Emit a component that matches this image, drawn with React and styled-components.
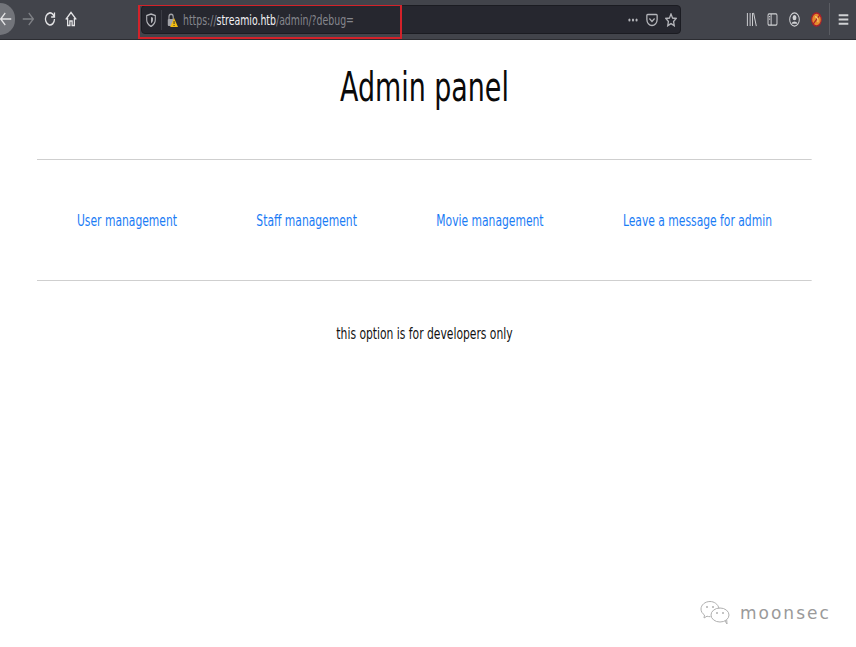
import React from 'react';
import styled, { createGlobalStyle } from 'styled-components';

// the whole shot is squeezed horizontally, so text blocks get the same factor
const SQUEEZE = 0.747;

const GlobalStyle = createGlobalStyle`
  html, body {
    margin: 0;
    padding: 0;
    background: #fff;
    font-family: "DejaVu Sans", "Liberation Sans", sans-serif;
  }
`;

const Page = styled.div`
  width: 856px;
  height: 647px;
  position: relative;
  overflow: hidden;
  display: flex;
  flex-direction: column;
`;

const Toolbar = styled.div`
  height: 39px;
  background: #42444b;
  border-bottom: 1px solid #2c2d32;
  display: flex;
  align-items: flex-start;
  flex-shrink: 0;
  position: relative;
`;

const NavGroup = styled.div`
  width: 141px;
  height: 38px;
  flex-shrink: 0;
  display: flex;
  align-items: center;
`;

const BackButton = styled.div`
  width: 15px;
  height: 32px;
  margin-right: 7px;
  border-radius: 0 16px 16px 0 / 0 16px 16px 0;
  background: #72747a;
  display: flex;
  align-items: center;
  justify-content: flex-start;
`;

const NavIcon = styled.svg`
  width: 12px;
  height: 16px;
  margin-right: ${p => p.$gap || 0}px;
  flex-shrink: 0;
  fill: none;
  stroke: ${p => p.$color || '#e4e4e6'};
  stroke-width: 1.7;
`;

const UrlBar = styled.div`
  width: 540px;
  height: 29px;
  margin-top: 5px;
  background: #26272f;
  border: 1px solid #1b1c22;
  border-radius: 4px;
  box-sizing: border-box;
  display: flex;
  align-items: center;
  padding: 0 3px 0 4px;
`;

const UrlIcon = styled.svg`
  width: ${p => p.$w || 10}px;
  height: 14px;
  flex-shrink: 0;
  fill: none;
  stroke: ${p => p.$color || '#b4b5ba'};
  stroke-width: 1.5;
  margin-left: ${p => p.$left || 0}px;
`;

const Divider = styled.div`
  width: 1px;
  height: 20px;
  background: #3b3c44;
  margin: 0 5px;
`;

const UrlText = styled.div`
  font-size: 14px;
  font-stretch: condensed;
  color: #85868d;
  margin-left: 5px;
  white-space: nowrap;
  flex: 1;
  transform: scaleX(0.743);
  transform-origin: left center;
  b {
    font-weight: 400;
    color: #f2f2f4;
  }
`;

const RightGroup = styled.div`
  flex: 1;
  height: 38px;
  display: flex;
  align-items: center;
  padding-left: 65px;
`;

const ToolIcon = styled.svg`
  width: 11px;
  height: 15px;
  flex-shrink: 0;
  fill: none;
  stroke: #d0d1d4;
  stroke-width: 1.4;
  margin-right: ${p => p.$gap || 0}px;
`;

const ToolDivider = styled.div`
  width: 1px;
  height: 32px;
  background: #5a5c62;
  margin: 0 8px 0 7px;
`;

const Highlight = styled.div`
  position: absolute;
  left: 138px;
  top: 5px;
  width: 264px;
  height: 34px;
  box-sizing: border-box;
  border: 2px solid #d3222a;
  border-top-width: 1px;
`;

const Content = styled.main`
  width: ${775 / SQUEEZE}px;
  margin-left: 37px;
  flex: 1;
  font-stretch: condensed;
  transform: scaleX(${SQUEEZE});
  transform-origin: left top;
`;

const Title = styled.h1`
  margin: 22px 0 0;
  height: 97px;
  font-size: 40px;
  line-height: 50px;
  font-weight: 400;
  text-align: center;
  color: #0a0a0a;
`;

const Rule = styled.hr`
  margin: 0;
  border: 0;
  border-top: 1px solid #cfcfcf;
`;

const Menu = styled.nav`
  height: 120px;
  display: flex;
  align-items: center;
  padding: 0 ${40 / SQUEEZE}px;
  justify-content: space-between;
`;

const MenuLink = styled.a`
  color: #1a7cf5;
  font-size: 16px;
  text-decoration: none;
`;

const Note = styled.p`
  margin: 42px 0 0;
  text-align: center;
  font-size: 16px;
  line-height: 21px;
  color: #111;
`;

const Watermark = styled.div`
  position: absolute;
  left: 700px;
  top: 600px;
  display: flex;
  align-items: center;
  gap: 8px;
`;

const WatermarkText = styled.span`
  font-size: 17px;
  letter-spacing: 2px;
  color: #9a9a9a;
`;

const LINKS = ['User management', 'Staff management', 'Movie management', 'Leave a message for admin'];

const App = () => (
  <>
    <GlobalStyle />
    <Page>
      <Toolbar>
        <NavGroup>
          <BackButton>
            <NavIcon viewBox="0 0 16 16" preserveAspectRatio="none">
              <path d="M15 8H1M7 2L1 8l6 6" />
            </NavIcon>
          </BackButton>
          <NavIcon viewBox="0 0 16 16" preserveAspectRatio="none" $gap={10} $color="#7f8186">
            <path d="M1 8h14M9 2l6 6-6 6" />
          </NavIcon>
          <NavIcon viewBox="0 0 16 16" preserveAspectRatio="none" $gap={9}>
            <path d="M14 8a6 6 0 1 1-2-4.500L14 6M14 1.500V6H9.500" />
          </NavIcon>
          <NavIcon viewBox="0 0 16 16" preserveAspectRatio="none">
            <path d="M1 8.500l7-7 7 7M3.500 7v7.500h3V10h3v4.500h3V7" />
          </NavIcon>
        </NavGroup>
        <UrlBar>
          <UrlIcon viewBox="0 0 14 14" preserveAspectRatio="none">
            <path d="M7 1l6 1.500V7c0 3-3 5-6 6.500C4 12 1 10 1 7V2.500z" />
            <path d="M7 4l2.800.8V7c0 1.500-1.300 2.500-2.800 3.300z" fill="#b4b5ba" stroke="none" />
          </UrlIcon>
          <Divider />
          <UrlIcon viewBox="0 0 14 14" preserveAspectRatio="none" $w={11} $color="#a2a3a8">
            <path d="M2.500 6V4a2.700 2.700 0 0 1 5.400 0v2" />
            <rect x="1" y="6" width="8" height="7" rx="1" fill="#a2a3a8" stroke="none" />
            <path d="M9 5l5 9H4z" fill="#f2bd12" stroke="none" />
            <path d="M9 8v3M9 12v1" stroke="#26272f" strokeWidth="1" />
          </UrlIcon>
          <UrlText>https://<b>streamio.htb</b>/admin/?debug=</UrlText>
          <UrlIcon viewBox="0 0 14 14" preserveAspectRatio="none">
            <circle cx="2" cy="7" r="1.500" fill="#b4b5ba" stroke="none" />
            <circle cx="7" cy="7" r="1.500" fill="#b4b5ba" stroke="none" />
            <circle cx="12" cy="7" r="1.500" fill="#b4b5ba" stroke="none" />
          </UrlIcon>
          <UrlIcon viewBox="0 0 14 14" preserveAspectRatio="none" $w={12} $left={8}>
            <path d="M2 1.500h10a1 1 0 0 1 1 1v4a6 6 0 0 1-12 0v-4a1 1 0 0 1 1-1z" />
            <path d="M4 5.500L7 8.500l3-3" />
          </UrlIcon>
          <UrlIcon viewBox="0 0 14 14" preserveAspectRatio="none" $w={12} $left={7}>
            <path d="M7 1l1.800 4 4.200.5-3 2.900.8 4.300L7 10.600l-3.800 2.100.8-4.300-3-2.900L5.200 5z" />
          </UrlIcon>
        </UrlBar>
        <RightGroup>
          <ToolIcon viewBox="0 0 16 16" preserveAspectRatio="none" $gap={10}>
            <path d="M2 1v14M6 1v14M9.500 1v14M11 1l4 14" />
          </ToolIcon>
          <ToolIcon viewBox="0 0 16 16" preserveAspectRatio="none" $gap={11}>
            <rect x="1.500" y="2" width="13" height="12" rx="1.500" />
            <path d="M6 2v12M3 5h1.500M3 7.500h1.500" />
          </ToolIcon>
          <ToolIcon viewBox="0 0 16 16" preserveAspectRatio="none" $gap={11}>
            <circle cx="8" cy="8" r="7" />
            <circle cx="8" cy="6" r="2.800" fill="#d0d1d4" stroke="none" />
            <path d="M3.500 12.500c1.500-3 7.500-3 9 0z" fill="#d0d1d4" stroke="none" />
          </ToolIcon>
          <ToolIcon viewBox="0 0 16 16" preserveAspectRatio="none">
            <circle cx="8" cy="8" r="7" fill="#e58a2b" stroke="#a8202c" strokeWidth="1.600" />
            <path d="M3 13L13 3" stroke="#a8202c" strokeWidth="1.500" />
            <path d="M6 5c3 0 5 3 4 6" stroke="#f7cf78" strokeWidth="1.600" />
          </ToolIcon>
          <ToolDivider />
          <ToolIcon viewBox="0 0 16 16" preserveAspectRatio="none" style={{ strokeWidth: 2 }}>
            <path d="M1 3.500h14M1 8h14M1 12.500h14" />
          </ToolIcon>
        </RightGroup>
        <Highlight />
      </Toolbar>
      <Content>
        <Title>Admin panel</Title>
        <Rule />
        <Menu>
          {LINKS.map(link => (
            <MenuLink href="#" key={link}>{link}</MenuLink>
          ))}
        </Menu>
        <Rule />
        <Note>this option is for developers only</Note>
      </Content>
      <Watermark>
        <svg width="32" height="26" viewBox="0 0 32 26" fill="none" stroke="#b0b0b0" strokeWidth="1">
          <path d="M19 8.500C18 4 14 1.500 10 1.500 5 1.500 1 5 1 9c0 2.500 1.300 4.500 3.500 6L4 18l3-1.800c1 .3 2 .5 3.500.5" />
          <ellipse cx="20" cy="15" rx="9" ry="7" />
          <path d="M25 21l2 3-.3-4" />
          <circle cx="7" cy="7" r="1" fill="#b0b0b0" stroke="none" />
          <circle cx="13" cy="7" r="1" fill="#b0b0b0" stroke="none" />
          <circle cx="17" cy="13" r="1" fill="#b0b0b0" stroke="none" />
          <circle cx="23" cy="13" r="1" fill="#b0b0b0" stroke="none" />
        </svg>
        <WatermarkText>moonsec</WatermarkText>
      </Watermark>
    </Page>
  </>
);

export default App;
